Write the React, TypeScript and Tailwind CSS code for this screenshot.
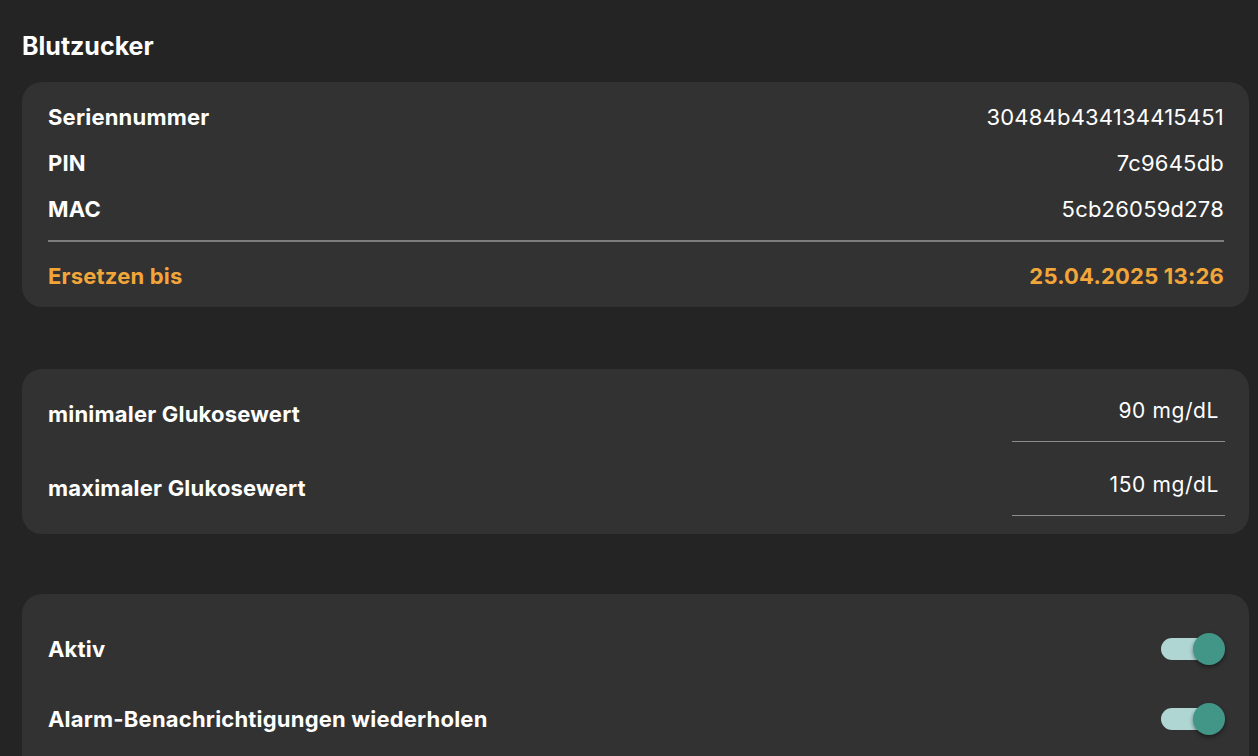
import React, { useState } from 'react';

const font = { fontFamily: 'Inter, "Noto Sans", sans-serif' };

const InfoRow: React.FC<{ label: string; value: string; accent?: boolean }> = ({ label, value, accent }) => (
  <div className={`flex items-center justify-between h-[46px] text-[22px] ${accent ? 'text-[#f2a63a]' : 'text-white'}`}>
    <span className="font-bold tracking-[0.2px]">{label}</span>
    <span className={accent ? 'font-bold tracking-[0.2px]' : 'font-normal tracking-[0.2px]'}>{value}</span>
  </div>
);

const ValueRow: React.FC<{ label: string; value: string }> = ({ label, value }) => (
  <div className="flex items-center justify-between h-[74px]">
    <span className="text-[22px] font-bold tracking-[0.2px] text-white">{label}</span>
    <div className="w-[213px] h-[55px] border-b border-[#8c8c8c] pt-[10px] pr-[6px] text-right text-[21px] leading-[28px] tracking-[0.6px] text-white">
      {value}
    </div>
  </div>
);

const Toggle: React.FC<{ on: boolean; onChange: () => void }> = ({ on, onChange }) => (
  <button onClick={onChange} className="relative w-[64px] h-[32px] flex items-center">
    <span className={`absolute left-0 w-[56px] h-[22px] rounded-full ${on ? 'bg-[#afd6d3]' : 'bg-[#6b6b6b]'}`} />
    <span
      className={`absolute top-0 w-[32px] h-[32px] rounded-full shadow-[0_2px_4px_rgba(0,0,0,0.45)] ${
        on ? 'right-0 bg-[#429687]' : 'left-0 bg-[#d9d9d9]'
      }`}
    />
  </button>
);

export default function App() {
  const [active, setActive] = useState(true);
  const [repeat, setRepeat] = useState(true);

  return (
    <div className="min-h-screen bg-[#242424] pl-[22px] pr-[9px] overflow-hidden" style={font}>
      <h1 className="pt-[30px] mb-[20px] text-[25px] leading-[32px] font-bold text-white">Blutzucker</h1>

      <div className="rounded-[20px] bg-[#323232] pl-[26px] pr-[25px] pt-[12px] pb-[8px]">
        <InfoRow label="Seriennummer" value="30484b434134415451" />
        <InfoRow label="PIN" value="7c9645db" />
        <InfoRow label="MAC" value="5cb26059d278" />
        <div className="h-[2px] bg-[#7d7d7d] mt-[8px] mb-[11px]" />
        <InfoRow label="Ersetzen bis" value="25.04.2025 13:26" accent />
      </div>

      <div className="mt-[62px] rounded-[20px] bg-[#323232] pl-[26px] pr-[24px] pt-[8px] pb-[9px]">
        <ValueRow label="minimaler Glukosewert" value="90 mg/dL" />
        <ValueRow label="maximaler Glukosewert" value="150 mg/dL" />
      </div>

      <div className="mt-[60px] rounded-t-[20px] bg-[#323232] pl-[26px] pr-[24px] pt-[20px] pb-[20px]">
        <div className="flex items-center justify-between h-[70px]">
          <span className="text-[22px] font-bold tracking-[0.2px] text-white">Aktiv</span>
          <Toggle on={active} onChange={() => setActive(!active)} />
        </div>
        <div className="flex items-center justify-between h-[70px]">
          <span className="text-[22px] font-bold tracking-[0.2px] text-white">Alarm-Benachrichtigungen wiederholen</span>
          <Toggle on={repeat} onChange={() => setRepeat(!repeat)} />
        </div>
      </div>
    </div>
  );
}
